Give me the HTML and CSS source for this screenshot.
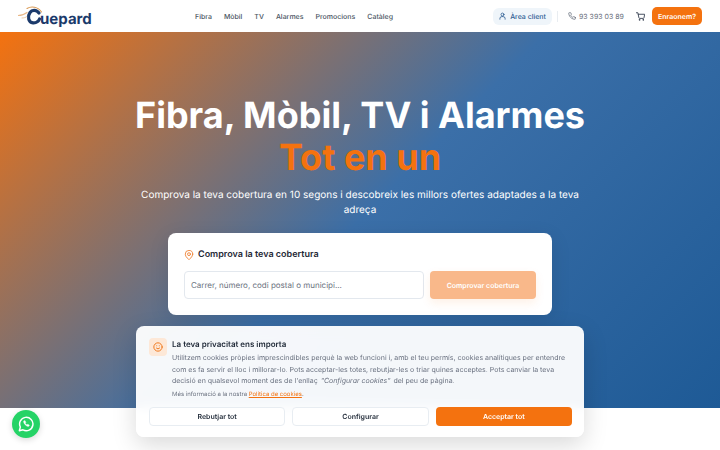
FILE: index.html
```html
<!DOCTYPE html>
<html lang="ca">
<head>
    <meta charset="UTF-8">
    <meta name="viewport" content="width=device-width, initial-scale=1.0">
    <title>Guepard</title>
    <link rel="stylesheet" href="styles.css">
</head>
<body>
    <header class="site-header">
        <a class="logo" href="#">
            <svg class="logo-mark" width="24" height="20" viewBox="0 0 24 20" fill="none">
                <path d="M0 9.500 C3 9.500 6 9 9 6.500" stroke="#e9b98a" stroke-width="1.200" stroke-linecap="round"/>
                <path d="M4 12 C6 12 7.500 11.500 9 10.500" stroke="#eccdab" stroke-width="1" stroke-linecap="round"/>
                <path d="M21 7 C18.500 3.500 14 3.500 12 6.500 C9.500 10 10 16.500 15 16.800 C18 17 20.500 15.500 21.500 13" stroke="#1b3a6b" stroke-width="3.200" stroke-linecap="round"/>
                <path d="M9 2.500 C13 0 20 0.500 23.500 6" stroke="#d99a55" stroke-width="1.100" stroke-linecap="round"/>
            </svg>
            <span class="logo-text">uepard</span>
        </a>
        <nav class="main-nav">
            <a href="#">Fibra</a>
            <a href="#">Mòbil</a>
            <a href="#">TV</a>
            <a href="#">Alarmes</a>
            <a href="#">Promocions</a>
            <a href="#">Catàleg</a>
        </nav>
        <div class="header-actions">
            <a class="client-btn" href="#">
                <svg width="7" height="8" viewBox="0 0 24 24" fill="none" stroke="#2b5c92" stroke-width="2.800" stroke-linecap="round" stroke-linejoin="round"><circle cx="12" cy="7" r="5"/><path d="M3 23v-2a7 7 0 0 1 7-7h4a7 7 0 0 1 7 7v2"/></svg>
                Àrea client
            </a>
            <span class="divider"></span>
            <a class="phone" href="#">
                <svg width="8" height="8" viewBox="0 0 24 24" fill="none" stroke="#6b7280" stroke-width="2.400" stroke-linecap="round" stroke-linejoin="round"><path d="M22 16.900v3a2 2 0 0 1-2.200 2 19.800 19.800 0 0 1-8.600-3 19.500 19.500 0 0 1-6-6 19.800 19.800 0 0 1-3-8.700A2 2 0 0 1 4.100 2h3a2 2 0 0 1 2 1.700c.1 1 .4 1.900.7 2.800a2 2 0 0 1-.5 2.100L8.100 9.900a16 16 0 0 0 6 6l1.300-1.300a2 2 0 0 1 2.100-.4c.9.300 1.800.6 2.800.7a2 2 0 0 1 1.700 2z"/></svg>
                93 393 03 89
            </a>
            <a class="cart" href="#">
                <svg width="9" height="9" viewBox="0 0 24 24" fill="none" stroke="#374151" stroke-width="2.400" stroke-linecap="round" stroke-linejoin="round"><circle cx="9" cy="21" r="1"/><circle cx="19" cy="21" r="1"/><path d="M1 2h4l2.700 13.400a2 2 0 0 0 2 1.600h9.700a2 2 0 0 0 2-1.600L23 6H6"/></svg>
            </a>
            <a class="cta-btn" href="#">Enraonem?</a>
        </div>
    </header>

    <section class="hero">
        <h1>Fibra, Mòbil, TV i Alarmes<span>Tot en un</span></h1>
        <p class="hero-sub">Comprova la teva cobertura en 10 segons i descobreix les millors ofertes adaptades a la teva adreça</p>
        <div class="coverage-card">
            <div class="coverage-title">
                <svg width="10" height="10" viewBox="0 0 24 24" fill="none" stroke="#f0863a" stroke-width="2.200" stroke-linecap="round" stroke-linejoin="round"><path d="M21 10c0 7-9 13-9 13s-9-6-9-13a9 9 0 0 1 18 0z"/><circle cx="12" cy="10" r="3.500"/></svg>
                Comprova la teva cobertura
            </div>
            <form class="coverage-form">
                <input type="text" placeholder="Carrer, número, codi postal o municipi...">
                <button type="button">Comprovar cobertura</button>
            </form>
        </div>
    </section>

    <div class="cookie-banner">
        <div class="cookie-top">
            <div class="cookie-icon">
                <svg width="10" height="10" viewBox="0 0 24 24" fill="none" stroke="#f07a20" stroke-width="2.400" stroke-linecap="round" stroke-linejoin="round"><circle cx="12" cy="12" r="10"/><path d="M8 14.500c1.500 2.500 6.500 2.500 8 0"/><path d="M9 9h.01M15 9h.01"/></svg>
            </div>
            <div class="cookie-copy">
                <h2>La teva privacitat ens importa</h2>
                <p class="cookie-text">Utilitzem cookies pròpies imprescindibles perquè la web funcioni i, amb el teu permís, cookies analítiques per entendre com es fa servir el lloc i millorar-lo. Pots acceptar-les totes, rebutjar-les o triar quines acceptes. Pots canviar la teva decisió en qualsevol moment des de l'enllaç <em>"Configurar cookies"</em> del peu de pàgina.</p>
                <p class="cookie-more">Més informació a la nostra <a href="#">Política de cookies</a>.</p>
            </div>
        </div>
        <div class="cookie-buttons">
            <button class="btn-light" type="button">Rebutjar tot</button>
            <button class="btn-light" type="button">Configurar</button>
            <button class="btn-accept" type="button">Acceptar tot</button>
        </div>
    </div>

    <a class="whatsapp" href="#">
        <svg width="16" height="16" viewBox="0 0 24 24" fill="none" stroke="#fff" stroke-width="2.200" stroke-linecap="round" stroke-linejoin="round"><path d="M2 22l1.500-5.500A10 10 0 1 1 7.500 20.700z"/><path d="M8.500 8c-.5 3 4 8 7.500 7.500l1-1.800-2.500-1.200-1 1c-1.200-.5-2.300-1.600-2.800-2.800l1-1L10.500 7.200z" fill="#fff" stroke-width="0.800"/></svg>
    </a>
</body>
</html>
```

FILE: styles.css
```css
* {
    margin: 0;
    padding: 0;
    box-sizing: border-box;
    font-family: 'Inter', 'Liberation Sans', sans-serif;
    text-rendering: geometricPrecision;
}

html, body {
    width: 100%;
    height: 100%;
    background-color: #ffffff;
    overflow: hidden;
}

a {
    text-decoration: none;
    color: inherit;
}

.site-header {
    height: 32px;
    background: #ffffff;
    display: flex;
    align-items: center;
    padding: 0 18px;
}

.logo {
    display: flex;
    align-items: center;
    width: 177px;
}

.logo-mark {
    margin-right: -2px;
    flex: none;
}

.logo-text {
    font-size: 15px;
    font-weight: 700;
    color: #1b3a6b;
    margin-top: 5px;
}

.main-nav {
    display: flex;
    gap: 12px;
    font-size: 7px;
    font-weight: 500;
    color: #4b5563;
}

.header-actions {
    display: flex;
    align-items: center;
    margin-left: auto;
}

.client-btn {
    display: flex;
    align-items: center;
    gap: 4px;
    height: 17px;
    padding: 0 6px;
    border-radius: 6px;
    background: #eff5fa;
    color: #2b5c92;
    font-size: 7px;
    font-weight: 500;
}

.divider {
    width: 1px;
    height: 11px;
    background: #e9edf1;
    margin: 0 10px 0 5px;
}

.phone {
    display: flex;
    align-items: center;
    gap: 3px;
    font-size: 7px;
    color: #6b7280;
    margin-right: 12px;
}

.cart {
    display: flex;
    margin-right: 7px;
}

.cta-btn {
    height: 18px;
    padding: 0 6px;
    display: flex;
    align-items: center;
    border-radius: 5px;
    background: #f4720f;
    color: #ffffff;
    font-size: 7px;
    font-weight: 600;
}

.hero {
    height: 376px;
    background: linear-gradient(135deg, #f4720f 0%, #3b6fa8 50%, #1e5a96 100%);
    display: flex;
    flex-direction: column;
    align-items: center;
    padding-top: 62px;
}

.hero h1 {
    font-size: 36px;
    line-height: 42px;
    font-weight: 700;
    color: #ffffff;
    text-align: center;
}

.hero h1 span {
    display: block;
    color: #f4720f;
}

.hero-sub {
    width: 448px;
    margin-top: 10px;
    font-size: 10px;
    line-height: 15px;
    color: #ffffff;
    text-align: center;
}

.coverage-card {
    width: 384px;
    height: 82px;
    margin-top: 15px;
    padding: 16px;
    background: #ffffff;
    border-radius: 8px;
    box-shadow: 0 5px 20px rgba(0, 0, 0, 0.1);
}

.coverage-title {
    display: flex;
    align-items: center;
    gap: 4px;
    font-size: 9px;
    line-height: 12px;
    font-weight: 600;
    color: #1f2937;
}

.coverage-form {
    display: flex;
    gap: 6px;
    margin-top: 10px;
}

.coverage-form input {
    flex: 1;
    height: 28px;
    padding: 0 6px;
    border: 1px solid #e3e8ee;
    border-radius: 4px;
    font-size: 8px;
}

.coverage-form input::placeholder {
    color: #6b7280;
}

.coverage-form button {
    width: 106px;
    height: 28px;
    border: none;
    border-radius: 4px;
    background: #f9b88a;
    color: #ffffff;
    font-size: 7px;
    font-weight: 600;
    box-shadow: 0 4px 10px rgba(244, 114, 15, 0.1);
}

.cookie-banner {
    position: fixed;
    left: 136px;
    top: 326px;
    width: 448px;
    height: 111px;
    padding: 12px 12px 0 13px;
    background: rgba(255, 255, 255, 0.95);
    backdrop-filter: blur(6px);
    border-radius: 8px;
    box-shadow: 0 8px 24px rgba(0, 0, 0, 0.15);
}

.cookie-top {
    display: flex;
    gap: 5px;
}

.cookie-icon {
    flex: none;
    width: 18px;
    height: 18px;
    border-radius: 4px;
    background: #fde8d7;
    display: flex;
    align-items: center;
    justify-content: center;
}

.cookie-copy h2 {
    font-size: 8px;
    line-height: 12px;
    font-weight: 600;
    color: #1f2937;
}

.cookie-text {
    margin-top: 2px;
    font-size: 7px;
    line-height: 11.500px;
    color: #6b7280;
}

.cookie-text em {
    margin: 0 1px;
}

.cookie-more {
    margin-top: 3px;
    font-size: 6px;
    line-height: 9px;
    color: #6b7280;
}

.cookie-more a {
    color: #f4720f;
    text-decoration: underline;
}

.cookie-buttons {
    display: grid;
    grid-template-columns: 1fr 1fr 1fr;
    gap: 7px;
    margin-top: 8px;
}

.cookie-buttons button {
    height: 19px;
    border-radius: 4px;
    font-size: 7px;
    font-weight: 600;
}

.btn-light {
    background: #ffffff;
    border: 1px solid #e8edf2;
    color: #1f2937;
}

.btn-accept {
    background: #f4720f;
    border: none;
    color: #ffffff;
}

.whatsapp {
    position: fixed;
    left: 12px;
    top: 410px;
    width: 28px;
    height: 28px;
    border-radius: 50%;
    background: #25d366;
    display: flex;
    align-items: center;
    justify-content: center;
    box-shadow: 0 2px 6px rgba(0, 0, 0, 0.15);
}
```
